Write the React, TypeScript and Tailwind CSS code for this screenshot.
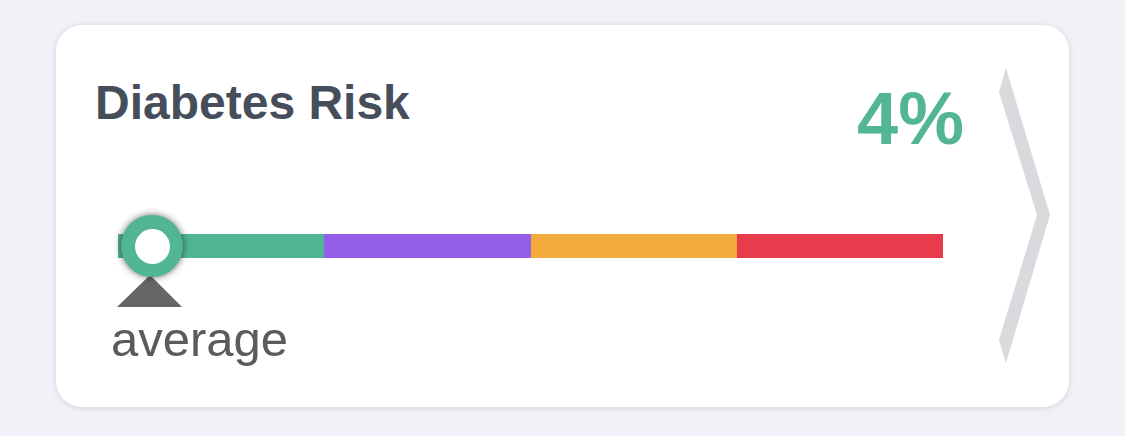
const segments = ["bg-[#52b595]", "bg-[#955ee8]", "bg-[#f2ac3c]", "bg-[#e93b4c]"];

export default function App() {
  return (
    <div className="w-[1125px] h-[436px] bg-[#f1f2f7] pt-[25px] pl-[56px] font-['Liberation_Sans',Arial,sans-serif]">
      <div className="w-[1013px] h-[382px] bg-white rounded-[26px] shadow-[0_1px_6px_rgba(0,0,0,0.13)] flex">
        <div className="flex-1 pl-[39px] pt-[54px]">
          <div className="flex items-start justify-between pr-[35px]">
            <h2 className="text-[48px] leading-none font-bold text-[#464e5c]">Diabetes Risk</h2>
            <div className="text-[74px] leading-none font-bold text-[#52b595] mt-[3px]">4%</div>
          </div>

          <div className="ml-[23px] mt-[78px]">
            <div className="relative flex w-[825px] h-[24px]">
              {segments.map((c) => (
                <div key={c} className={`flex-1 ${c}`} />
              ))}
              <div className="absolute left-[3px] top-[-19px] w-[62px] h-[62px] rounded-full bg-[#52b595] shadow-[0_0_7px_rgba(0,0,0,0.6)] flex items-center justify-center">
                <div className="w-[35px] h-[35px] rounded-full bg-white" />
              </div>
            </div>
            <svg width="65" height="32" viewBox="0 0 65 32" className="mt-[17px] ml-[-1px] block">
              <polygon points="33,0 65,32 0,32" fill="#666666" />
            </svg>
            <div className="mt-[8px] ml-[-7px] text-[49px] leading-none text-[#5b5b5b]">average</div>
          </div>
        </div>

        <svg width="52" height="296" viewBox="0 0 52 296" className="mt-[43px] mr-[18px] shrink-0">
          <polygon points="7,0 51,147 7,295 0,272 38,147 0,24" fill="#d9d9de" />
        </svg>
      </div>
    </div>
  );
}
